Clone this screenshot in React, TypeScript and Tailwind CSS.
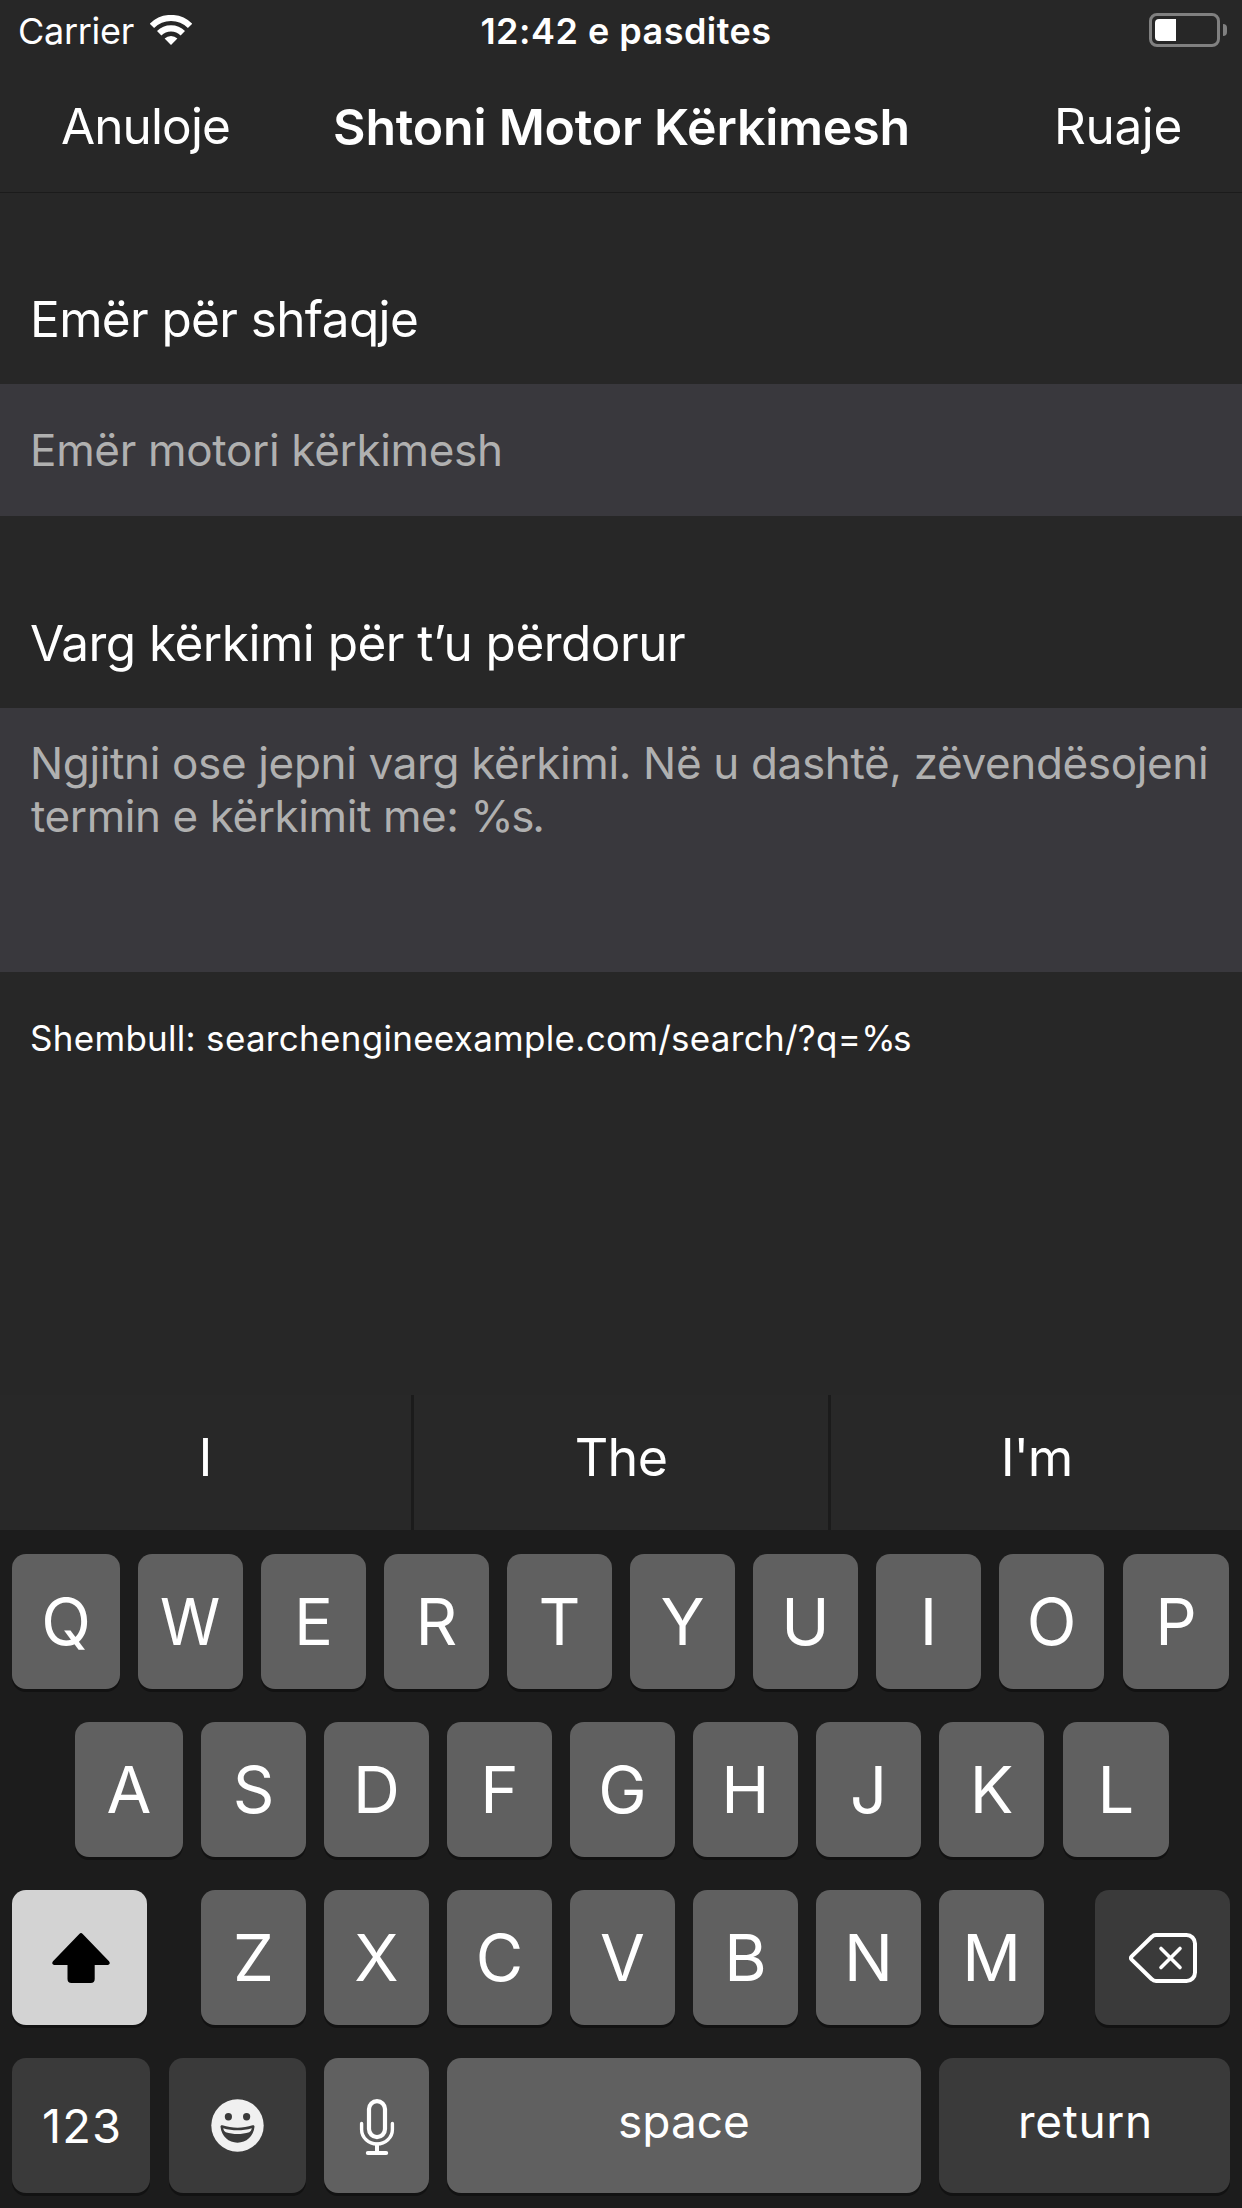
import type { ReactNode } from 'react';

function Wifi() {
  return (
    <svg className="block h-[30px] w-[42px]" viewBox="0 0 42 30" fill="none">
      <path d="M1.9 10.9a27 27 0 0 1 38.2 0" stroke="#fff" strokeWidth="6.2" />
      <path d="M9.2 18.2a16.7 16.7 0 0 1 23.6 0" stroke="#fff" strokeWidth="6.2" />
      <path d="M21 30l-6.4-6.4a9.1 9.1 0 0 1 12.8 0z" fill="#fff" />
    </svg>
  );
}

function Battery() {
  return (
    <div className="flex items-center gap-[3px]">
      <div className="h-[34px] w-[71px] rounded-[8px] border-[3px] border-[#808080] p-[3px]">
        <div className="h-full w-[21px] rounded-l-[4px] bg-white" />
      </div>
      <div className="h-[12px] w-[4px] rounded-r-full bg-[#808080]" />
    </div>
  );
}

function ShiftIcon() {
  return (
    <svg className="block h-[50px] w-[58px]" viewBox="0 0 58 50">
      <path
        d="M27.3.9a2.4 2.4 0 0 1 3.4 0L57 28.3c1.5 1.7.6 3.7-1.4 3.7H42.700v14a4 4 0 0 1-4 4H19.500a4 4 0 0 1-4-4V32H2.400C.4 32-.5 30 1 28.300z"
        fill="#000"
      />
    </svg>
  );
}

function DeleteIcon() {
  return (
    <svg className="block h-[50px] w-[68px]" viewBox="0 0 68 50" fill="none" stroke="#fff" strokeWidth="4" strokeLinecap="round" strokeLinejoin="round">
      <path d="M27 2H57.500a8.500 8.500 0 0 1 8.500 8.500v29a8.500 8.500 0 0 1-8.500 8.500H27a6 6 0 0 1-4.200-1.800L2.700 26.600a2.300 2.300 0 0 1 0-3.200L22.800 3.800A6 6 0 0 1 27 2z" />
      <path d="M32 15.500l19 19M51 15.500l-19 19" strokeWidth="3.600" />
    </svg>
  );
}

function EmojiIcon() {
  return (
    <svg className="block h-[53px] w-[53px]" viewBox="0 0 53 53">
      <circle cx="26.500" cy="26.500" r="26.200" fill="#f0f0f0" />
      <ellipse cx="17.400" cy="17.800" rx="3.600" ry="3.700" fill="#3a3a3a" />
      <ellipse cx="35.600" cy="17.800" rx="3.600" ry="3.700" fill="#3a3a3a" />
      <path d="M9.500 27.800c-.2-1.200.8-1.800 1.900-1.500 9.800 3.200 20.400 3.200 30.200 0 1.100-.3 2.100.3 1.900 1.500-1 9.600-8.200 15.900-17 15.900s-16-6.300-17-15.900z" fill="#3a3a3a" />
      <path d="M12.200 29.300c9.300 2.700 19.300 2.700 28.600 0-.3 1.900-1.300 3.300-2.600 3.900-7.500 2.400-15.900 2.400-23.400 0-1.300-.6-2.300-2-2.600-3.900z" fill="#f0f0f0" />
    </svg>
  );
}

function MicIcon() {
  return (
    <svg className="block h-[56px] w-[36px]" viewBox="0 0 36 56" fill="none" stroke="#fff" strokeLinecap="round">
      <rect x="10" y="2.100" width="16" height="36" rx="8" strokeWidth="4.200" />
      <path d="M2.600 24.500v6a15.400 14.500 0 0 0 30.800 0v-6" strokeWidth="3.400" />
      <path d="M18 45.500V53" strokeWidth="4" />
      <path d="M8.800 54h18.400" strokeWidth="4" />
    </svg>
  );
}

function Key({ children, className }: { children: ReactNode; className: string }) {
  return (
    <div className={`flex h-[135px] shrink-0 items-center justify-center rounded-[14px] shadow-[0_3px_0_#121212] ${className}`}>
      {children}
    </div>
  );
}

function keyWidth(char: string) {
  if (char === 'Q' || char === 'A') return 'w-[108px] bg-[#606060]';
  if (char === 'P' || char === 'L') return 'ml-px w-[106px] bg-[#606060]';
  return 'w-[105px] bg-[#606060]';
}

function Letter({ char }: { char: string }) {
  return (
    <Key className={keyWidth(char)}>
      <span className={char === 'W' ? 'scale-x-[0.94] text-[65px] leading-none' : 'text-[65px] leading-none'}>{char}</span>
    </Key>
  );
}

export default function App() {
  return (
    <div className="flex h-[2208px] w-[1242px] flex-col overflow-hidden bg-[#272727] font-['Inter','Liberation_Sans',sans-serif] text-white">
      <header>
        <div className="grid h-[60px] grid-cols-[1fr_auto_1fr] items-center pl-[18px] pr-[15px]">
          <div className="flex items-center">
            <span className="w-[132px] pt-[2px] text-[36px] leading-none tracking-[-0.3px]">Carrier</span>
            <Wifi />
          </div>
          <span className="ml-[7px] pt-[2px] text-[36px] leading-none font-semibold tracking-[0.48px]">12:42 e pasdites</span>
          <div className="flex justify-end">
            <Battery />
          </div>
        </div>
        <nav className="grid h-[133px] grid-cols-[1fr_auto_1fr] items-center border-b border-[#1b1b1b] pl-[61px] pr-[60px] text-[49.5px] leading-none">
          <span className="pt-[2px] tracking-[-0.89px]">Anuloje</span>
          <h1 className="pt-px text-[50px] font-semibold tracking-[-0.2px]">Shtoni Motor Kërkimesh</h1>
          <span className="pt-[2px] text-right tracking-[-0.35px]">Ruaje</span>
        </nav>
      </header>

      <main className="flex flex-1 flex-col">
        <h2 className="h-[191px] pt-[96px] pl-[30px] text-[49.5px] leading-[60px] tracking-[-0.62px]">Emër për shfaqje</h2>
        <div className="flex h-[132px] items-center bg-[#39383d] pl-[30px] text-[44px] leading-none tracking-[-0.32px] text-[#b0b0b0]">
          Emër motori kërkimesh
        </div>
        <h2 className="h-[192px] pt-[97px] pl-[30px] text-[49.5px] leading-[60px] tracking-[-0.51px]">Varg kërkimi për t’u përdorur</h2>
        <div className="h-[264px] bg-[#39383d] pt-[29px] pl-[30px] text-[44px] leading-[53px] whitespace-nowrap text-[#b0b0b0]">
          <p className="tracking-[-0.35px]">Ngjitni ose jepni varg kërkimi. Në u dashtë, zëvendësojeni</p>
          <p className="pl-px tracking-[-0.41px]">
            termin e kërkimit me: <span className="tracking-[-2.4px]">%s.</span>
          </p>
        </div>
        <p className="pl-[30px] text-[35px] leading-[132px] tracking-[0.29px]">
          Shembull: searchengineexample.com/search/?q=<span className="tracking-[-2.5px]">%s</span>
        </p>
      </main>

      <div className="grid h-[135px] grid-cols-[414px_417px_411px] bg-[#282828] text-[52px] leading-[125px]">
        <div className="border-r-3 border-[#1b1b1b] text-center">I</div>
        <div className="border-r-3 border-[#1b1b1b] text-center tracking-[-0.66px]">The</div>
        <div className="text-center tracking-[-1.28px]">I'm</div>
      </div>

      <div className="flex h-[678px] flex-col gap-[33px] bg-[#1c1c1c] pt-[24px] pl-[12px]">
        <div className="flex gap-[18px]">
          {'QWERTYUIOP'.split('').map((c) => (
            <Letter key={c} char={c} />
          ))}
        </div>
        <div className="flex gap-[18px] pl-[63px]">
          {'ASDFGHJKL'.split('').map((c) => (
            <Letter key={c} char={c} />
          ))}
        </div>
        <div className="flex">
          <Key className="w-[135px] bg-[#d3d3d3] pl-[3px]">
            <ShiftIcon />
          </Key>
          <div className="mr-[51px] ml-[54px] flex gap-[18px]">
            {'ZXCVBNM'.split('').map((c) => (
              <Letter key={c} char={c} />
            ))}
          </div>
          <Key className="w-[135px] bg-[#3a3a3a]">
            <DeleteIcon />
          </Key>
        </div>
        <div className="flex gap-[18px]">
          <Key className="mr-px w-[138px] bg-[#3a3a3a]">
            <span className="pl-[2px] text-[47px] leading-none tracking-[1.11px]">123</span>
          </Key>
          <Key className="w-[137px] bg-[#3a3a3a]">
            <EmojiIcon />
          </Key>
          <Key className="w-[105px] bg-[#606060] pt-[3px]">
            <MicIcon />
          </Key>
          <Key className="w-[474px] bg-[#606060]">
            <span className="pb-[10px] text-[46px] leading-none">space</span>
          </Key>
          <Key className="w-[291px] bg-[#3a3a3a]">
            <span className="pb-[10px] pl-[2px] text-[46px] leading-none tracking-[0.67px]">return</span>
          </Key>
        </div>
      </div>
    </div>
  );
}
